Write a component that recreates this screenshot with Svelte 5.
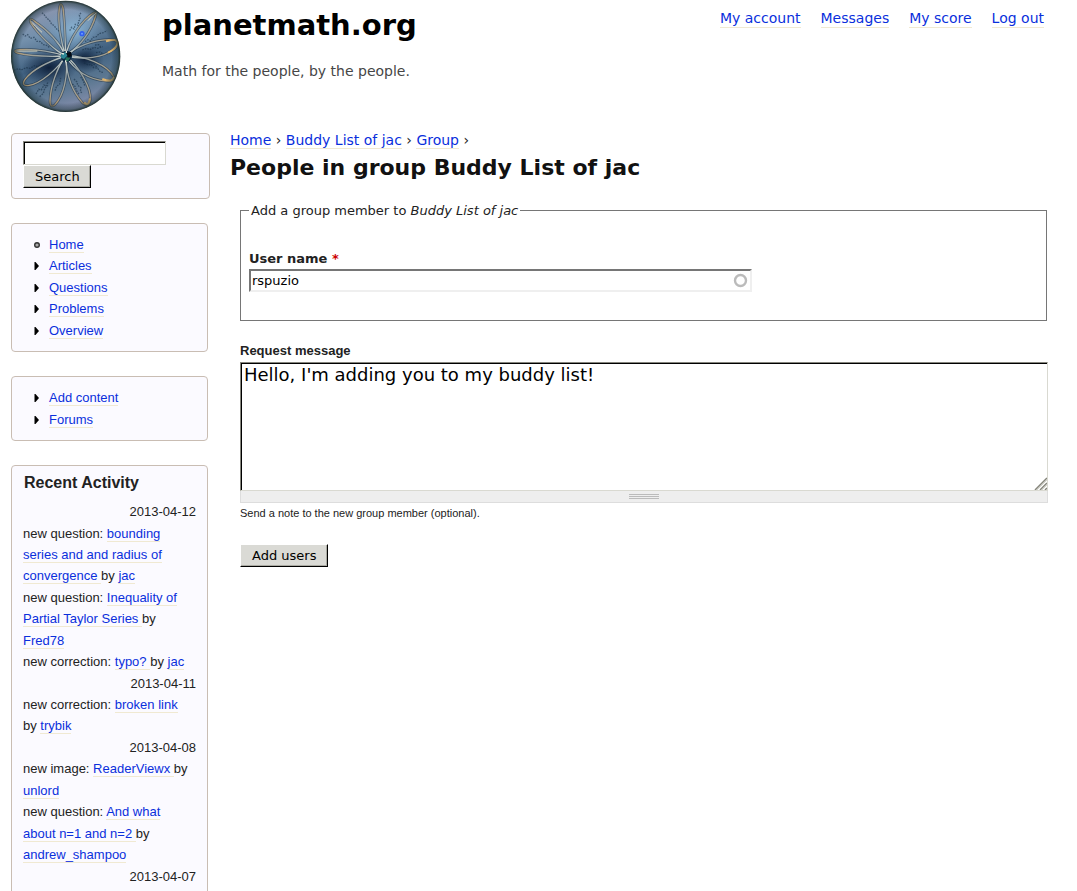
<script>
  const account = ['My account', 'Messages', 'My score', 'Log out'];
  const sections = ['Home', 'Articles', 'Questions', 'Problems', 'Overview'];
  const actions = ['Add content', 'Forums'];
  const crumbs = ['Home', 'Buddy List of jac', 'Group'];
  const days = [
    {
      date: '2013-04-12',
      items: [
        { kind: 'question', title: 'bounding series and and radius of convergence', by: 'jac' },
        { kind: 'question', title: 'Inequality of Partial Taylor Series', by: 'Fred78' },
        { kind: 'correction', title: 'typo?', by: 'jac' }
      ]
    },
    { date: '2013-04-11', items: [{ kind: 'correction', title: 'broken link', by: 'trybik' }] },
    {
      date: '2013-04-08',
      items: [
        { kind: 'image', title: 'ReaderViewx', by: 'unlord' },
        { kind: 'question', title: 'And what about n=1 and n=2', by: 'andrew_shampoo' }
      ]
    },
    { date: '2013-04-07', items: [] }
  ];
  const petals = [
    'M197 168C184 130 172 70 178 24Q182 0 189 24C195 70 196 130 197 168',
    'M197 168C206 120 245 60 282 38Q293 32 287 48C270 105 230 145 197 168',
    'M197 168C240 128 310 115 342 120Q362 128 345 145C310 175 250 180 197 168',
    'M197 168C250 165 325 195 342 232Q343 246 318 243C260 238 220 205 197 168',
    'M197 168C235 195 275 265 271 300Q267 325 249 310C212 270 199 220 197 168',
    'M197 168C206 225 191 288 165 314Q150 326 150 304C151 260 170 205 197 168',
    'M197 168C175 205 120 253 84 257Q62 258 75 238C100 205 160 180 197 168',
    'M197 168C150 170 90 168 52 159Q34 151 58 149C100 146 155 155 197 168',
    'M197 168C160 150 112 100 92 68Q86 48 104 64C145 92 180 130 197 168'
  ];
  const scribbles = [
    'M126 38l8 8 6 8 9 8 5 9 9 7 7 9 9 8',
    'M68 102l8 6 7-4 8 11 11-3 9 12 10 1 9 9 10 2 9 7',
    'M42 211l13-5 9 4 14-7 12 2 14-8 10 3 13-9 13 2',
    'M209 92l6-10 7 5 4-14 8 3 2-13 5-5 -3-13 6-8',
    'M255 125l9-6 7 4 8-11 10-2 8-9 13-3 11-6',
    'M247 150l13-5 9 4 14-7 10 3 15-5M285 135l11-1 6 7M288 158l12-2 8 5',
    'M252 189l13 6 8-2 8 10 12 2 8 11 8 1M266 186l12 3 15 14',
    'M222 237l9 9 2 10 10 7-2 12 7 5M217 252l8 7 5 14 8 11M242 231l8 12 5 17',
    'M108 282l8-14 8 2 8-15 5 4 7-12M119 290l11-10 4-15 10-9M165 272l5-14 9-5 3-20'
  ];
  let query = $state('');
  let user = $state('rspuzio');
  let message = $state("Hello, I'm adding you to my buddy list!");
</script>

<div class="page">
  <header>
    <a class="logo" href="#home" aria-label="Home">
      <svg width="110" height="112" viewBox="33 0 330 336">
        <defs>
          <linearGradient id="ball" x1=".3" y1="0" x2=".6" y2="1">
            <stop offset="0" stop-color="#9297b0" /><stop offset=".28" stop-color="#7390ac" />
            <stop offset=".55" stop-color="#40607f" /><stop offset=".78" stop-color="#5c7892" />
            <stop offset="1" stop-color="#8b91b0" />
          </linearGradient>
          <radialGradient id="rim"><stop offset=".84" stop-color="#162a38" stop-opacity="0" /><stop offset=".95" stop-color="#243b42" stop-opacity=".5" /><stop offset="1" stop-color="#1d2c28" /></radialGradient>
          <radialGradient id="shine"><stop stop-color="#93c0e0" stop-opacity=".8" /><stop offset="1" stop-color="#7ba7cd" stop-opacity="0" /></radialGradient>
          <radialGradient id="dark"><stop stop-color="#06152e" stop-opacity=".85" /><stop offset="1" stop-color="#0b213f" stop-opacity="0" /></radialGradient>
          <radialGradient id="wire" gradientUnits="userSpaceOnUse" cx="197" cy="168" r="165">
            <stop stop-color="#d5ded9" /><stop offset=".35" stop-color="#98a3a5" /><stop offset=".7" stop-color="#a39f90" /><stop offset=".9" stop-color="#b39a72" /><stop offset="1" stop-color="#6d5f50" />
          </radialGradient>
        </defs>
        <ellipse cx="197" cy="169" rx="163" ry="166" fill="url(#ball)" />
        <ellipse cx="222" cy="92" rx="80" ry="76" fill="url(#shine)" />
        <ellipse cx="147" cy="203" rx="82" ry="56" fill="url(#dark)" />
        <ellipse cx="254" cy="178" rx="58" ry="44" fill="url(#dark)" />
        <g fill="none" stroke="#142b40" stroke-width="4" stroke-dasharray="5 3" opacity=".55">
          {#each scribbles as d}<path {d} />{/each}
        </g>
        <g fill="none" stroke="#1b2c3c" stroke-width="8" opacity=".55">
          {#each petals as d}<path {d} />{/each}
        </g>
        <g fill="none" stroke="url(#wire)" stroke-width="4">
          {#each petals as d}<path {d} />{/each}
        </g>
        <path d="M318 124Q350 115 353 127Q351 145 324 158M307 237Q339 249 342 231M253 307Q266 322 270 295" fill="none" stroke="#e2b66e" stroke-width="6" />
        <path d="M91 62Q105 79 126 97M49 153L112 153M290 38Q276 48 264 62" fill="none" stroke="#d9d3ba" stroke-width="3" />
        <circle cx="199" cy="169" r="17" fill="#0b2640" />
        <path d="M184 160l12-3 8 8-12 12-9-4z" fill="#2c8795" /><path d="M199 160l14-5 2 12-10 7z" fill="#050b13" />
        <path d="M198 172l13 1-7 11-9-2z" fill="#267159" /><path d="M184 160l8 2M199 152v7M197 181v6" stroke="#e9eadd" stroke-width="4" />
        <circle cx="246" cy="101" r="8" fill="#315ff0" /><circle cx="246" cy="101" r="3" fill="#6d9bff" />
        <ellipse cx="197" cy="169" rx="164" ry="167" fill="url(#rim)" />
      </svg>
    </a>
    <div class="brand">
      <div class="site">planetmath.org</div>
      <div class="slogan">Math for the people, by the people.</div>
    </div>
    <nav class="account" aria-label="Account">
      {#each account as item}<a href="#account">{item}</a>{/each}
    </nav>
  </header>

  <div class="columns">
    <aside>
      <form class="block search" onsubmit={(e) => e.preventDefault()}>
        <input class="bevel" type="text" aria-label="Search" bind:value={query} />
        <button>Search</button>
      </form>
      <nav class="block" aria-label="Sections">
        <ul>
          {#each sections as item, i}
            <li>
              <svg width="8" height="10" viewBox="0 0 8 10" aria-hidden="true">
                {#if i === 0}<circle cx="4" cy="5" r="2.3" fill="#aaa" stroke="#333" stroke-width="1.4" />{:else}<path d="M1.5 1v8h1L6 5 2.500 1z" fill="#000" />{/if}
              </svg><a href="#section">{item}</a>
            </li>
          {/each}
        </ul>
      </nav>
      <nav class="block" aria-label="Actions">
        <ul>
          {#each actions as item}
            <li>
              <svg width="8" height="10" viewBox="0 0 8 10" aria-hidden="true"><path d="M1.5 1v8h1L6 5 2.500 1z" fill="#000" /></svg><a href="#action">{item}</a>
            </li>
          {/each}
        </ul>
      </nav>
      <section class="block activity">
        <h2>Recent Activity</h2>
        {#each days as day}
          <div class="date">{day.date}</div>
          {#each day.items as item}
            <div class="entry">new {item.kind}: <a href="#item">{item.title + ' '}</a>by <a href="#user">{item.by}</a></div>
          {/each}
        {/each}
      </section>
    </aside>

    <main>
      <nav class="crumbs" aria-label="Breadcrumb">
        {#each crumbs as item}<a href="#crumb">{item}</a>{' › '}{/each}
      </nav>
      <h1>People in group Buddy List of jac</h1>
      <form class="content" onsubmit={(e) => e.preventDefault()}>
        <fieldset>
          <legend>Add a group member to <em>Buddy List of jac</em></legend>
          <label for="user">User name <span class="required">*</span></label>
          <div class="autocomplete">
            <input id="user" type="text" bind:value={user} />
            <svg width="15" height="15" viewBox="0 0 15 15" aria-hidden="true"><circle cx="7.5" cy="7.5" r="5.5" fill="none" stroke="#bbb" stroke-width="2.4" /></svg>
          </div>
        </fieldset>
        <label class="message-label" for="message">Request message</label>
        <div class="resizable">
          <textarea id="message" class="bevel" bind:value={message}></textarea>
          <svg class="corner" width="13" height="13" viewBox="0 0 13 13" aria-hidden="true"><path d="M1 13L13 1M6 13l7-7M11 13l2-2" stroke="#85857b" stroke-width="1.5" /><path d="M3 13L13 3M8 13l5-5" stroke="#d5d5cc" /></svg>
        </div>
        <div class="grip"><svg width="30" height="6" viewBox="0 0 30 6" aria-hidden="true"><path d="M0 .5h30M0 2.500h30M0 4.500h30" stroke="#bbb" /></svg></div>
        <p>Send a note to the new group member (optional).</p>
        <button>Add users</button>
      </form>
    </main>
  </div>
</div>

<style>
  :global(body) { background: #fff; }
  * { box-sizing: border-box; }
  .page {
    height: 100vh;
    overflow: hidden;
    padding: 0 29px 0 11px;
    color: #222;
    font: 13px/1.65 "Liberation Sans", Arial, sans-serif;
  }
  a { color: #0a2fdc; text-decoration: none; border-bottom: 1px solid #f0e9d2; }
  header {
    display: flex;
    align-items: flex-start;
    height: 133px;
    font-family: "DejaVu Sans", Verdana, sans-serif;
  }
  .logo { width: 151px; border: 0; }
  .logo svg { display: block; }
  .brand { flex: 1; }
  .site { padding-top: 6px; color: #000; font-size: 29px; font-weight: bold; line-height: 38px; }
  .slogan { margin-top: 16px; color: #464646; font-size: 14px; line-height: 22px; }
  .account { display: flex; gap: 20px; padding: 10px 4px 0 0; font-size: 14px; line-height: 17px; }
  .columns { display: grid; grid-template-columns: 199px minmax(0, 1fr); gap: 20px; }
  aside { display: flex; flex-direction: column; gap: 24px; }
  .block {
    margin-right: 2px;
    padding: 10px 11px;
    border: 1px solid #c9bdb3;
    border-radius: 4px;
    background: #fbfaff;
  }
  .search {
    display: flex;
    flex-direction: column;
    align-items: flex-start;
    height: 66px;
    margin-right: 0;
    padding: 7px 11px;
  }
  input, textarea, button { margin: 0; border-radius: 0; outline: 0; color: #000; font: 13px "DejaVu Sans", Verdana, sans-serif; }
  .bevel {
    border: 1px solid;
    border-color: #85857d #d9d9d1 #d9d9d1 #85857d;
    background: #fff;
    box-shadow: inset 1px 1px #000;
  }
  .search input { width: 143px; height: 24px; padding: 0 3px; }
  button {
    height: 23px;
    padding: 0 11px;
    border: 1px solid;
    border-color: #fff #000 #000 #fff;
    background: #dadad5;
    box-shadow: inset -1px -1px #aaaaa2;
    line-height: 20px;
  }
  .search button { padding-right: 10px; }
  ul { margin: 0; padding: 0 0 0 10px; list-style: none; }
  li svg { margin-right: 8px; vertical-align: -1px; }
  .activity { min-height: 480px; padding-top: 6px; }
  h2 { margin: 0 0 8px; padding-left: 1px; font-size: 16px; line-height: 21px; }
  .date { text-align: right; }
  .entry { padding-right: 2px; }
  .crumbs { padding-bottom: 3px; font: 14px/14px "DejaVu Sans", Verdana, sans-serif; }
  h1 { margin: 4px 0 0; color: #111; font: bold 22px/28px "DejaVu Sans", Verdana, sans-serif; }
  .content { padding: 18px 0 0 10px; }
  fieldset {
    margin: 0 1px 0 0;
    padding: 28px 8px;
    border: 1px solid #767676;
    font-family: "DejaVu Sans", Verdana, sans-serif;
  }
  legend { padding: 0 2px; }
  label { display: block; font-weight: bold; line-height: 20px; }
  .required { color: #c00; }
  .autocomplete { display: grid; max-width: 503px; align-items: center; }
  .autocomplete input {
    grid-area: 1 / 1;
    width: 100%;
    height: 23px;
    padding: 0 1px;
    border: 2px solid;
    border-color: #767676 #efefef #efefef #767676;
  }
  .autocomplete svg { grid-area: 1 / 1; justify-self: end; margin-right: 4px; }
  .message-label { margin-top: 19px; line-height: 22px; }
  .resizable { position: relative; }
  textarea { display: block; width: 100%; height: 129px; padding: 1px 3px; resize: none; font-size: 18px; line-height: 21px; }
  .corner { position: absolute; right: 1px; bottom: 1px; }
  .grip {
    display: flex;
    justify-content: center;
    height: 12px;
    padding-top: 3px;
    border: 1px solid #ddd;
    border-top: 0;
    background: #eee;
  }
  p { margin: 2px 0 22px; font-size: 11px; line-height: 17px; }
</style>
